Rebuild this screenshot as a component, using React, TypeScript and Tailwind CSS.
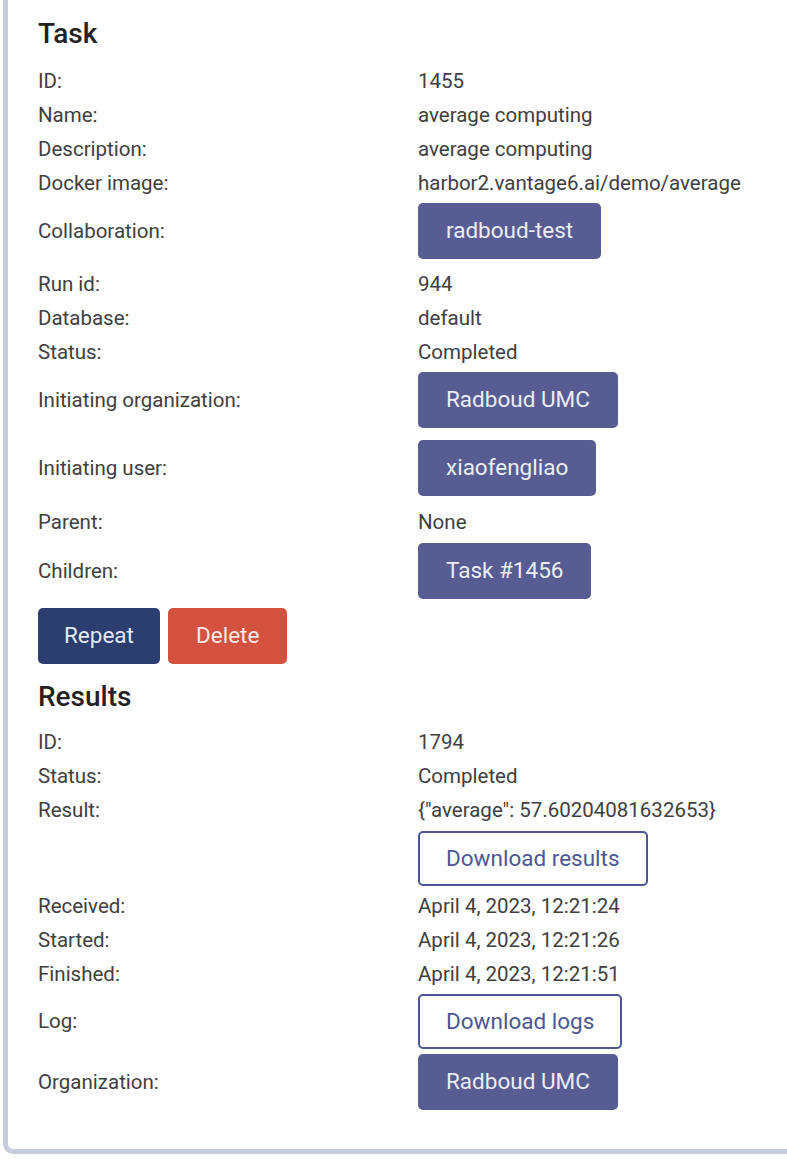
import type { ReactNode } from 'react'

type Row = { label: string; value: ReactNode }

const Pill = ({ children }: { children: ReactNode }) => (
  <span className="inline-flex h-[56px] items-center rounded-[5px] bg-[#575d92] px-[28px] text-[22.5px] text-[#eceef6]">
    {children}
  </span>
)

const Outline = ({ children }: { children: ReactNode }) => (
  <span className="inline-flex h-[55px] items-center rounded-[5px] border-2 border-[#4d5793] bg-white px-[26px] text-[22.5px] text-[#4d5793]">
    {children}
  </span>
)

function TextRow({ label, value }: Row) {
  return (
    <div className="flex h-[34px] items-center">
      <span className="w-[380px] shrink-0">{label}</span>
      <span>{value}</span>
    </div>
  )
}

function ButtonRow({ label, children, className }: { label: string; children: ReactNode; className: string }) {
  return (
    <div className={`flex items-center ${className}`}>
      <span className="w-[380px] shrink-0">{label}</span>
      {children}
    </div>
  )
}

const task: Row[] = [
  { label: 'ID:', value: '1455' },
  { label: 'Name:', value: 'average computing' },
  { label: 'Description:', value: 'average computing' },
  { label: 'Docker image:', value: 'harbor2.vantage6.ai/demo/average' },
]

export default function App() {
  return (
    <div className="min-h-screen bg-white font-['Roboto',sans-serif] text-[20.5px] text-[#404040]">
      <div className="ml-[3px] rounded-bl-[10px] border-b-[5px] border-l-[5px] border-[#c4cdd9] pb-[36px] pl-[30px] pt-[14px]">
        <h2 className="mb-[10px] text-[28px] font-medium leading-[40px] text-[#222]">Task</h2>

        {task.map(r => <TextRow key={r.label} label={r.label} value={r.value} />)}
        <ButtonRow label="Collaboration:" className="pb-[8px] pt-[3px]">
          <Pill>radboud-test</Pill>
        </ButtonRow>
        <TextRow label="Run id:" value="944" />
        <TextRow label="Database:" value="default" />
        <TextRow label="Status:" value="Completed" />
        <ButtonRow label="Initiating organization:" className="pb-[9px] pt-[3px]">
          <Pill>Radboud UMC</Pill>
        </ButtonRow>
        <ButtonRow label="Initiating user:" className="pb-[9px] pt-[3px]">
          <Pill>xiaofengliao</Pill>
        </ButtonRow>
        <TextRow label="Parent:" value="None" />
        <ButtonRow label="Children:" className="pb-[8px] pt-[4px]">
          <Pill>Task #1456</Pill>
        </ButtonRow>

        <div className="mt-[1px] flex gap-[8px]">
          <button className="h-[56px] rounded-[5px] bg-[#2b3e6f] px-[26px] text-[22.5px] text-[#e6eaf4]">Repeat</button>
          <button className="h-[56px] rounded-[5px] bg-[#d5513f] px-[28px] text-[22.5px] text-[#fbe9e6]">Delete</button>
        </div>

        <h2 className="mb-[8px] mt-[13px] text-[28px] font-medium leading-[40px] text-[#222]">Results</h2>
        <TextRow label="ID:" value="1794" />
        <TextRow label="Status:" value="Completed" />
        <TextRow label="Result:" value={'{"average": 57.60204081632653}'} />
        <div className="flex pb-[3px] pt-[4px]">
          <span className="w-[380px] shrink-0" />
          <Outline>Download results</Outline>
        </div>
        <TextRow label="Received:" value="April 4, 2023, 12:21:24" />
        <TextRow label="Started:" value="April 4, 2023, 12:21:26" />
        <TextRow label="Finished:" value="April 4, 2023, 12:21:51" />
        <ButtonRow label="Log:" className="pb-[2px] pt-[3px]">
          <Outline>Download logs</Outline>
        </ButtonRow>
        <ButtonRow label="Organization:" className="pb-[3px] pt-[3px]">
          <Pill>Radboud UMC</Pill>
        </ButtonRow>
      </div>
    </div>
  )
}
